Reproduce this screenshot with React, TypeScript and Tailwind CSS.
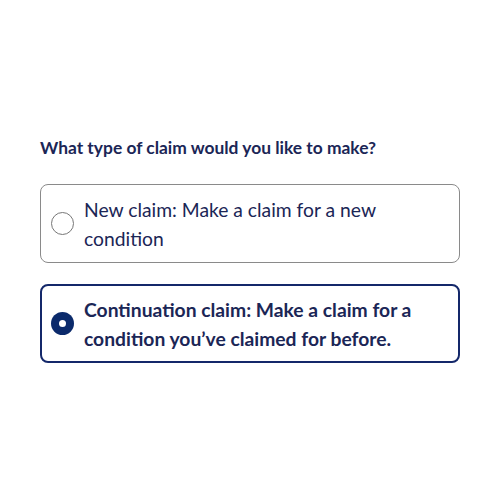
import { useState } from "react";

const options = [
  { id: "new", label: "New claim: Make a claim for a new condition" },
  { id: "continuation", label: "Continuation claim: Make a claim for a condition you\u2019ve claimed for before." },
];

export default function App() {
  const [selected, setSelected] = useState("continuation");

  return (
    <div className="w-[500px] h-[500px] bg-white flex flex-col px-10 pt-[137px] font-['Lato',sans-serif] text-[#1b2656]">
      <h2 className="text-[17.4px] font-bold leading-[22px]">What type of claim would you like to make?</h2>

      <div className="mt-[25px] flex flex-col gap-[21px]">
        {options.map((o) => {
          const active = selected === o.id;
          return (
            <button
              key={o.id}
              onClick={() => setSelected(o.id)}
              className={`flex items-center gap-[10px] text-left rounded-lg pr-8 h-[79px] ${
                active ? "border-2 border-[#14286a] pl-[9px]" : "border border-[#8a8a8a] pl-[10px]"
              }`}
            >
              {active ? (
                <span className="w-[23px] h-[23px] shrink-0 rounded-full bg-[#0b2a6b] flex items-center justify-center">
                  <span className="w-[7px] h-[7px] rounded-full bg-white" />
                </span>
              ) : (
                <span className="w-[23px] h-[23px] shrink-0 rounded-full border border-[#777] bg-white" />
              )}
              <span className={`text-[19.3px] leading-[29px] ${active ? "font-bold" : ""}`}>{o.label}</span>
            </button>
          );
        })}
      </div>
    </div>
  );
}
